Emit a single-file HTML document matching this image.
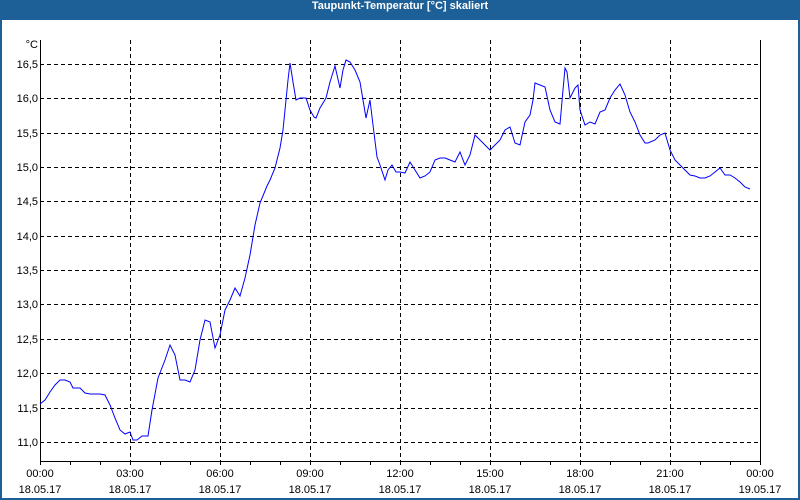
<!DOCTYPE html>
<html><head><meta charset="utf-8"><style>
html,body{margin:0;padding:0;width:800px;height:500px;overflow:hidden;background:#1d5f97}
.w{position:absolute;left:2px;top:20px;width:796px;height:478px;background:#fff}
.t{position:absolute;left:0;top:0;width:800px;height:20px;line-height:19px;text-align:center;color:#fff;font:bold 11px "Liberation Sans",sans-serif}
svg{position:absolute;left:0;top:0}
text{font-family:"Liberation Sans",sans-serif;font-size:11px;fill:#000}
</style></head><body>
<div class="t">Taupunkt-Temperatur [°C] skaliert</div>
<div class="w"></div>
<svg width="800" height="500">
<g stroke="#000" stroke-width="1" stroke-dasharray="4,3" shape-rendering="crispEdges">
<line x1="40" x2="760" y1="64.5" y2="64.5"/><line x1="40" x2="760" y1="98.5" y2="98.5"/>
<line x1="40" x2="760" y1="133.5" y2="133.5"/><line x1="40" x2="760" y1="167.5" y2="167.5"/>
<line x1="40" x2="760" y1="201.5" y2="201.5"/><line x1="40" x2="760" y1="236.5" y2="236.5"/>
<line x1="40" x2="760" y1="270.5" y2="270.5"/><line x1="40" x2="760" y1="304.5" y2="304.5"/>
<line x1="40" x2="760" y1="339.5" y2="339.5"/><line x1="40" x2="760" y1="373.5" y2="373.5"/>
<line x1="40" x2="760" y1="408.5" y2="408.5"/><line x1="40" x2="760" y1="442.5" y2="442.5"/>
<line y1="40" y2="461" x1="130.5" x2="130.5"/><line y1="40" y2="461" x1="220.5" x2="220.5"/>
<line y1="40" y2="461" x1="310.5" x2="310.5"/><line y1="40" y2="461" x1="400.5" x2="400.5"/>
<line y1="40" y2="461" x1="490.5" x2="490.5"/><line y1="40" y2="461" x1="580.5" x2="580.5"/>
<line y1="40" y2="461" x1="670.5" x2="670.5"/>
</g>
<g stroke="#000" stroke-width="1" shape-rendering="crispEdges" fill="none">
<path d="M40.5 40V461.5H760.5V40"/>
<path d="M40.5 461v4M70.5 461v4M100.5 461v4M130.5 461v4M160.5 461v4M190.5 461v4M220.5 461v4M250.5 461v4M280.5 461v4M310.5 461v4M340.5 461v4M370.5 461v4M400.5 461v4M430.5 461v4M460.5 461v4M490.5 461v4M520.5 461v4M550.5 461v4M580.5 461v4M610.5 461v4M640.5 461v4M670.5 461v4M700.5 461v4M730.5 461v4M760.5 461v4"/>
</g>
<polyline fill="none" stroke="#0000ff" stroke-width="1" points="40,404 45,400 50,392 55,385 60,380 65,380 70,382 73,388 80,388 85,393 90,394 100,394 105,395 110,405 115,418 120,430 125,434 130,432 133,440 137,440 142,436 148,436 152,410 158,378 165,360 170,345 175,355 180,380 185,380 190,382 195,370 200,340 205,320 210,322 215,348 220,335 225,310 230,300 235,288 240,296 245,278 250,255 255,225 260,203 267,186 270,180 275,168 280,148 283,130 285,110 288,80 290,63 293,82 296,100 300,98 306,98 310,110 314,117 316,118 320,108 326,98 330,82 335,66 340,88 343,70 346,60 350,62 355,70 360,82 363,100 366,118 370,100 373,125 377,157 380,165 385,180 388,170 392,165 396,172 400,172 405,173 410,162 415,170 420,178 425,176 430,172 435,160 440,158 445,158 450,160 455,162 460,152 465,165 470,155 475,135 480,140 485,145 490,150 495,145 500,140 505,130 510,127 515,143 520,145 525,122 530,115 533,100 535,83 540,85 545,87 550,110 555,122 560,124 563,90 565,68 567,72 570,98 575,88 578,85 580,110 585,125 590,122 595,124 600,112 605,110 610,98 615,90 620,84 625,95 630,112 635,122 640,135 645,143 648,143 655,140 660,135 665,133 670,150 675,160 680,165 685,170 690,175 695,176 700,178 705,178 710,176 715,172 720,168 725,175 730,175 735,178 740,182 745,187 750,189"/>
<g text-anchor="end">
<text x="38" y="48">°C</text>
<text x="38" y="68">16,5</text><text x="38" y="102">16,0</text><text x="38" y="137">15,5</text>
<text x="38" y="171">15,0</text><text x="38" y="205">14,5</text><text x="38" y="240">14,0</text>
<text x="38" y="274">13,5</text><text x="38" y="308">13,0</text><text x="38" y="343">12,5</text>
<text x="38" y="377">12,0</text><text x="38" y="412">11,5</text><text x="38" y="446">11,0</text>
</g>
<g text-anchor="middle">
<text x="40" y="477">00:00</text><text x="40" y="493">18.05.17</text>
<text x="130" y="477">03:00</text><text x="130" y="493">18.05.17</text>
<text x="220" y="477">06:00</text><text x="220" y="493">18.05.17</text>
<text x="310" y="477">09:00</text><text x="310" y="493">18.05.17</text>
<text x="400" y="477">12:00</text><text x="400" y="493">18.05.17</text>
<text x="490" y="477">15:00</text><text x="490" y="493">18.05.17</text>
<text x="580" y="477">18:00</text><text x="580" y="493">18.05.17</text>
<text x="670" y="477">21:00</text><text x="670" y="493">18.05.17</text>
<text x="760" y="477">00:00</text><text x="760" y="493">19.05.17</text>
</g>
</svg>
</body></html>
